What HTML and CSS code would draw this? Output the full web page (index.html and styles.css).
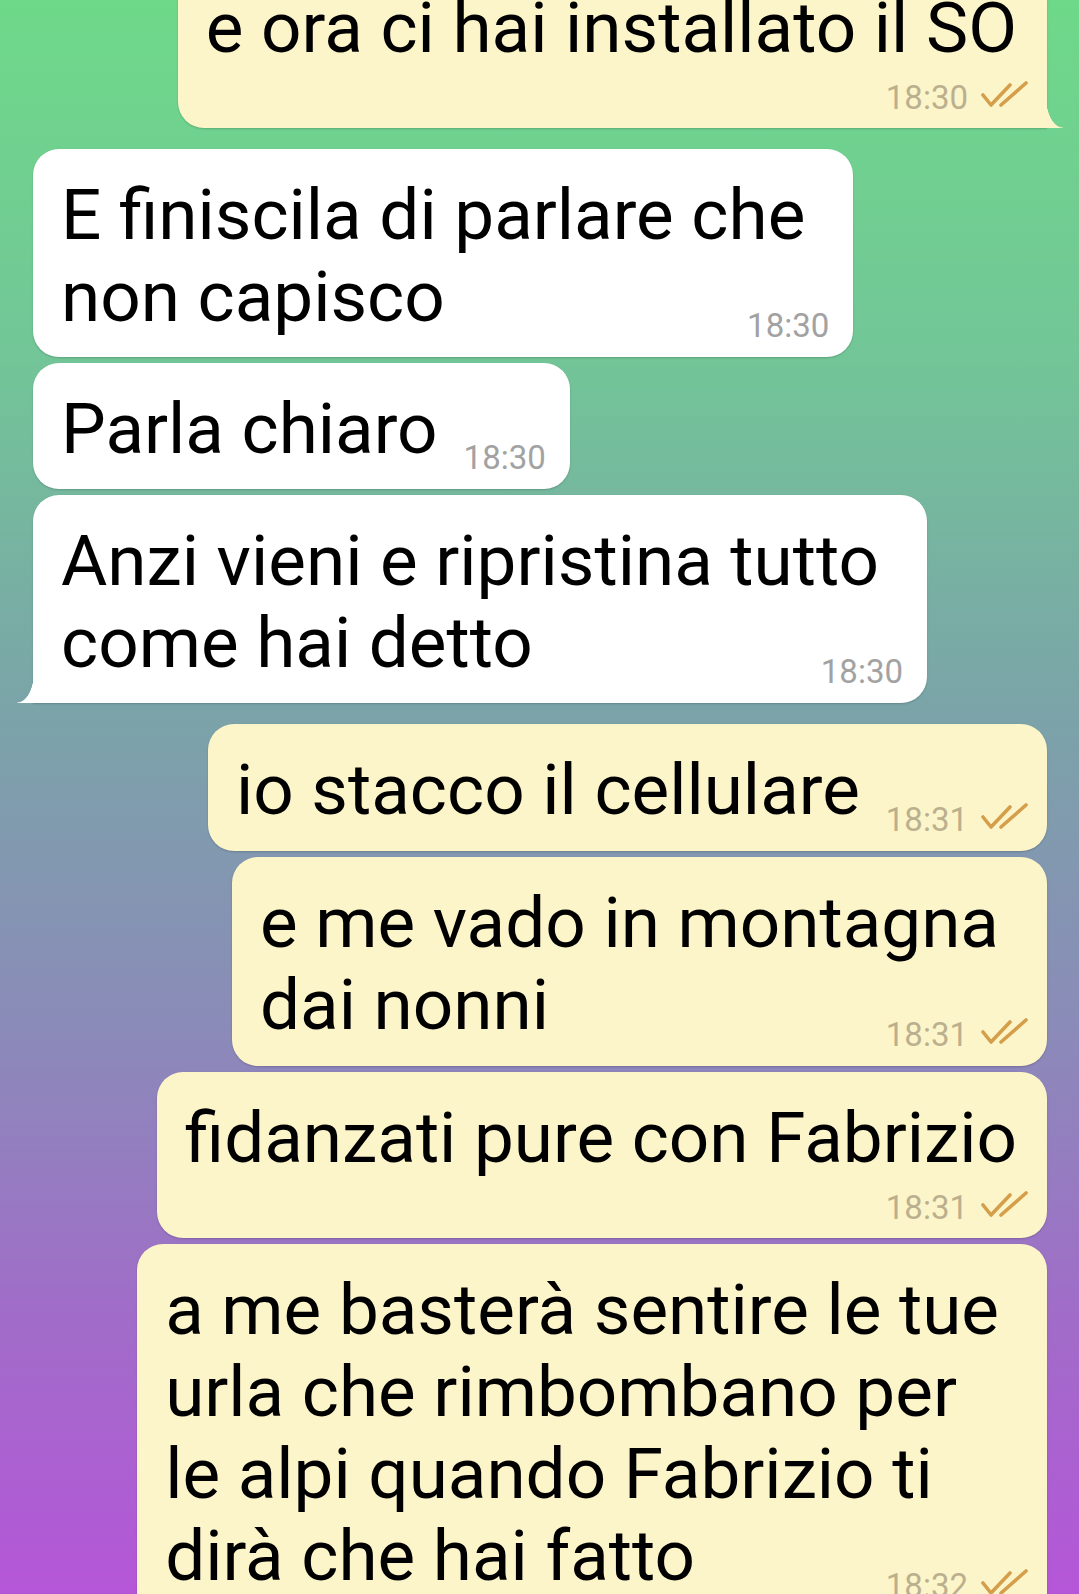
FILE: index.html
```html
<!DOCTYPE html>
<html lang="it">
<head>
  <meta charset="UTF-8">
  <title>Chat</title>
  <link rel="stylesheet" href="styles.css">
</head>
<body>

<div class="chat">

  <div class="bubble out stacked tail">
    <span class="text">e ora ci hai installato il SO</span>
    <span class="meta">18:30<svg class="ticks" viewBox="0 0 48 27"><path d="M2 14 L10 24 L29 4 M20 24 L45 2"/></svg></span>
  </div>

  <div class="bubble in wide first">
    <span class="text">E finiscila di parlare che<br>non capisco</span><span class="meta">18:30</span>
  </div>

  <div class="bubble in">
    <span class="text">Parla chiaro</span><span class="meta">18:30</span>
  </div>

  <div class="bubble in wide tail">
    <span class="text">Anzi vieni e ripristina tutto<br>come hai detto</span><span class="meta">18:30</span>
  </div>

  <div class="bubble out first">
    <span class="text">io stacco il cellulare</span><span class="meta">18:31<svg class="ticks" viewBox="0 0 48 27"><path d="M2 14 L10 24 L29 4 M20 24 L45 2"/></svg></span>
  </div>

  <div class="bubble out wide">
    <span class="text">e me vado in montagna<br>dai nonni</span><span class="meta">18:31<svg class="ticks" viewBox="0 0 48 27"><path d="M2 14 L10 24 L29 4 M20 24 L45 2"/></svg></span>
  </div>

  <div class="bubble out stacked">
    <span class="text">fidanzati pure con Fabrizio</span>
    <span class="meta">18:31<svg class="ticks" viewBox="0 0 48 27"><path d="M2 14 L10 24 L29 4 M20 24 L45 2"/></svg></span>
  </div>

  <div class="bubble out wide tail">
    <span class="text">a me basterà sentire le tue<br>urla che rimbombano per<br>le alpi quando Fabrizio ti<br>dirà che hai fatto</span><span class="meta">18:32<svg class="ticks" viewBox="0 0 48 27"><path d="M2 14 L10 24 L29 4 M20 24 L45 2"/></svg></span>
  </div>

</div>

</body>
</html>
```

FILE: styles.css
```css
* {
  box-sizing: border-box;
}

html {
  height: 100%;
}

body {
  margin: 0;
  height: 100%;
  overflow: hidden;
  font-family: Roboto, "Noto Sans", sans-serif;
  color: #000;
  background: linear-gradient(180deg, #6ed989 0%, #72c697 22%, #7ba3a9 45%, #8b8ab9 65%, #a06dc8 82%, #b556d8 100%);
}

.chat {
  display: flex;
  flex-direction: column;
  margin-top: -44px;
}

.bubble {
  position: relative;
  font-size: 71px;
  line-height: 82px;
  white-space: nowrap;
  padding: 25px 24px 15px 28px;
  border-radius: 26px;
  margin-top: 6px;
  box-shadow: 0 1px 2px rgba(0, 0, 0, 0.18);
}

.bubble.first {
  margin-top: 21px;
}

.in {
  align-self: flex-start;
  margin-left: 33px;
  background: #fff;
}

.out {
  align-self: flex-end;
  margin-right: 32px;
  background: #fdf5ca;
  padding-right: 18px;
}

.meta {
  float: right;
  margin: 54px 0 0 26px;
  font-size: 33px;
  line-height: 32px;
  color: #a2a2a2;
}

.out .meta {
  color: #bbb08e;
}

.ticks {
  width: 48px;
  height: 27px;
  margin-left: 13px;
  vertical-align: 1px;
  fill: none;
  stroke: #d49e4a;
  stroke-width: 3.6;
  stroke-linecap: round;
  stroke-linejoin: round;
}

/* multi-line: text keeps extra room on the right, time stays in the corner */
.wide {
  padding-right: 48px;
}

.in.wide .meta {
  margin-right: -24px;
}

.out.wide .meta {
  margin-right: -30px;
}

/* time does not fit beside the text: drops to its own row */
.stacked {
  padding-right: 30px;
  padding-bottom: 14px;
}

.stacked .text {
  display: block;
}

.stacked .meta {
  float: none;
  display: block;
  text-align: right;
  margin: 12px -12px 0 0;
}

.in.tail {
  border-bottom-left-radius: 0;
}

.out.tail {
  border-bottom-right-radius: 0;
}

.in.tail::after,
.out.tail::after {
  content: "";
  position: absolute;
  bottom: 0;
  width: 17px;
  height: 30px;
}

.in.tail::after {
  left: -16px;
  background: radial-gradient(ellipse 17px 30px at 0 0, transparent 97%, #fff 100%);
}

.out.tail::after {
  right: -16px;
  background: radial-gradient(ellipse 17px 30px at 100% 0, transparent 97%, #fdf5ca 100%);
}
```
